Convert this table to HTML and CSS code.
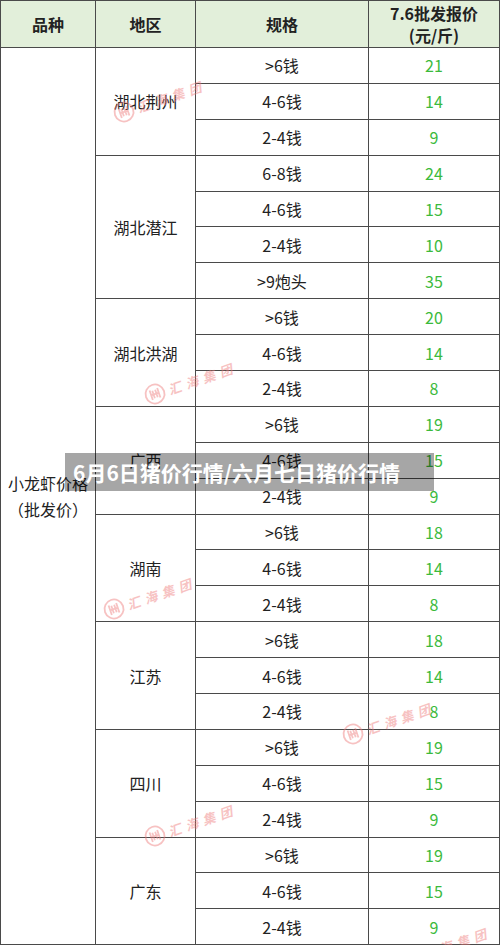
FILE: index.html
```html
<!DOCTYPE html>
<html lang="zh">
<head>
<meta charset="utf-8">
<title>小龙虾价格</title>
<link rel="stylesheet" href="styles.css">
</head>
<body>
<div class="sheet">
  <div class="cell head">品种</div>
  <div class="cell head">地区</div>
  <div class="cell head">规格</div>
  <div class="cell head">7.6批发报价<br>(元/斤)</div>

  <div class="cell kind span-all">小龙虾价格<br>（批发价）</div>

  <div class="cell region span-3">湖北荆州</div>
  <div class="cell">&gt;6钱</div><div class="cell price">21</div>
  <div class="cell">4-6钱</div><div class="cell price">14</div>
  <div class="cell">2-4钱</div><div class="cell price">9</div>

  <div class="cell region span-4">湖北潜江</div>
  <div class="cell">6-8钱</div><div class="cell price">24</div>
  <div class="cell">4-6钱</div><div class="cell price">15</div>
  <div class="cell">2-4钱</div><div class="cell price">10</div>
  <div class="cell">&gt;9炮头</div><div class="cell price">35</div>

  <div class="cell region span-3">湖北洪湖</div>
  <div class="cell">&gt;6钱</div><div class="cell price">20</div>
  <div class="cell">4-6钱</div><div class="cell price">14</div>
  <div class="cell">2-4钱</div><div class="cell price">8</div>

  <div class="cell region span-3">广西</div>
  <div class="cell">&gt;6钱</div><div class="cell price">19</div>
  <div class="cell">4-6钱</div><div class="cell price">15</div>
  <div class="cell">2-4钱</div><div class="cell price">9</div>

  <div class="cell region span-3">湖南</div>
  <div class="cell">&gt;6钱</div><div class="cell price">18</div>
  <div class="cell">4-6钱</div><div class="cell price">14</div>
  <div class="cell">2-4钱</div><div class="cell price">8</div>

  <div class="cell region span-3">江苏</div>
  <div class="cell">&gt;6钱</div><div class="cell price">18</div>
  <div class="cell">4-6钱</div><div class="cell price">14</div>
  <div class="cell">2-4钱</div><div class="cell price">8</div>

  <div class="cell region span-3">四川</div>
  <div class="cell">&gt;6钱</div><div class="cell price">19</div>
  <div class="cell">4-6钱</div><div class="cell price">15</div>
  <div class="cell">2-4钱</div><div class="cell price">9</div>

  <div class="cell region span-3">广东</div>
  <div class="cell">&gt;6钱</div><div class="cell price">19</div>
  <div class="cell">4-6钱</div><div class="cell price">15</div>
  <div class="cell">2-4钱</div><div class="cell price">9</div>
</div>

<div class="wm wm1"><svg class="logo" viewBox="0 0 22 22"><circle cx="11" cy="11" r="9.5"/><path d="M7 6v10M15 6v10M7 11h8M9.5 7v8M12.5 7v8"/></svg><span>汇海集团</span></div>
<div class="wm wm2"><svg class="logo" viewBox="0 0 22 22"><circle cx="11" cy="11" r="9.5"/><path d="M7 6v10M15 6v10M7 11h8M9.5 7v8M12.5 7v8"/></svg><span>汇海集团</span></div>
<div class="wm wm3"><svg class="logo" viewBox="0 0 22 22"><circle cx="11" cy="11" r="9.5"/><path d="M7 6v10M15 6v10M7 11h8M9.5 7v8M12.5 7v8"/></svg><span>汇海集团</span></div>
<div class="wm wm4"><svg class="logo" viewBox="0 0 22 22"><circle cx="11" cy="11" r="9.5"/><path d="M7 6v10M15 6v10M7 11h8M9.5 7v8M12.5 7v8"/></svg><span>汇海集团</span></div>
<div class="wm wm5"><svg class="logo" viewBox="0 0 22 22"><circle cx="11" cy="11" r="9.5"/><path d="M7 6v10M15 6v10M7 11h8M9.5 7v8M12.5 7v8"/></svg><span>汇海集团</span></div>
<div class="wm wm6"><svg class="logo" viewBox="0 0 22 22"><circle cx="11" cy="11" r="9.5"/><path d="M7 6v10M15 6v10M7 11h8M9.5 7v8M12.5 7v8"/></svg><span>汇海集团</span></div>

<div class="banner">6月6日猪价行情/六月七日猪价行情</div>
</body>
</html>
```

FILE: styles.css
```css
html, body {
  margin: 0;
  padding: 0;
}

body {
  position: relative;
  width: 500px;
  height: 945px;
  overflow: hidden;
  background: #ffffff;
  font-family: "Noto Sans CJK SC", "Noto Sans", sans-serif;
  color: #222222;
}

.sheet {
  display: grid;
  grid-template-columns: 94px 99px 172px 130px;
  grid-template-rows: 46px repeat(25, 34.9px);
  gap: 1px;
  background: #4a4a4a;
  border: 1px solid #4a4a4a;
  width: 500px;
  box-sizing: border-box;
}

.cell {
  background: #ffffff;
  display: flex;
  align-items: center;
  justify-content: center;
  text-align: center;
  font-size: 16px;
  line-height: 22px;
}

.head {
  background: #e2efda;
  font-weight: 700;
  line-height: 22px;
}

.kind {
  grid-row: span 25;
  line-height: 26px;
}

.region.span-3 {
  grid-row: span 3;
}

.region.span-4 {
  grid-row: span 4;
}

.price {
  color: #3cba3c;
  font-size: 16px;
}

.wm {
  position: absolute;
  display: flex;
  align-items: center;
  gap: 3px;
  transform: rotate(-19deg);
  transform-origin: 11px 11px;
  opacity: 0.45;
  pointer-events: none;
}

.wm .logo {
  width: 22px;
  height: 22px;
  fill: none;
  stroke: #ee7a7a;
  stroke-width: 1.8;
}

.wm span {
  color: #ee7a7a;
  font-size: 13px;
  font-weight: 700;
  font-style: italic;
  letter-spacing: 5px;
  white-space: nowrap;
}

.wm1 { left: 113px; top: 101px; }
.wm2 { left: 144px; top: 383px; }
.wm3 { left: 103px; top: 598px; }
.wm4 { left: 342px; top: 723px; }
.wm5 { left: 144px; top: 825px; }
.wm6 { left: 398px; top: 948px; }

.banner {
  position: absolute;
  left: 65px;
  top: 453px;
  width: 369px;
  height: 38px;
  box-sizing: border-box;
  padding-left: 8px;
  display: flex;
  align-items: center;
  background: rgba(0, 0, 0, 0.35);
  color: #ffffff;
  font-size: 21px;
  font-weight: 700;
  white-space: nowrap;
}
```
